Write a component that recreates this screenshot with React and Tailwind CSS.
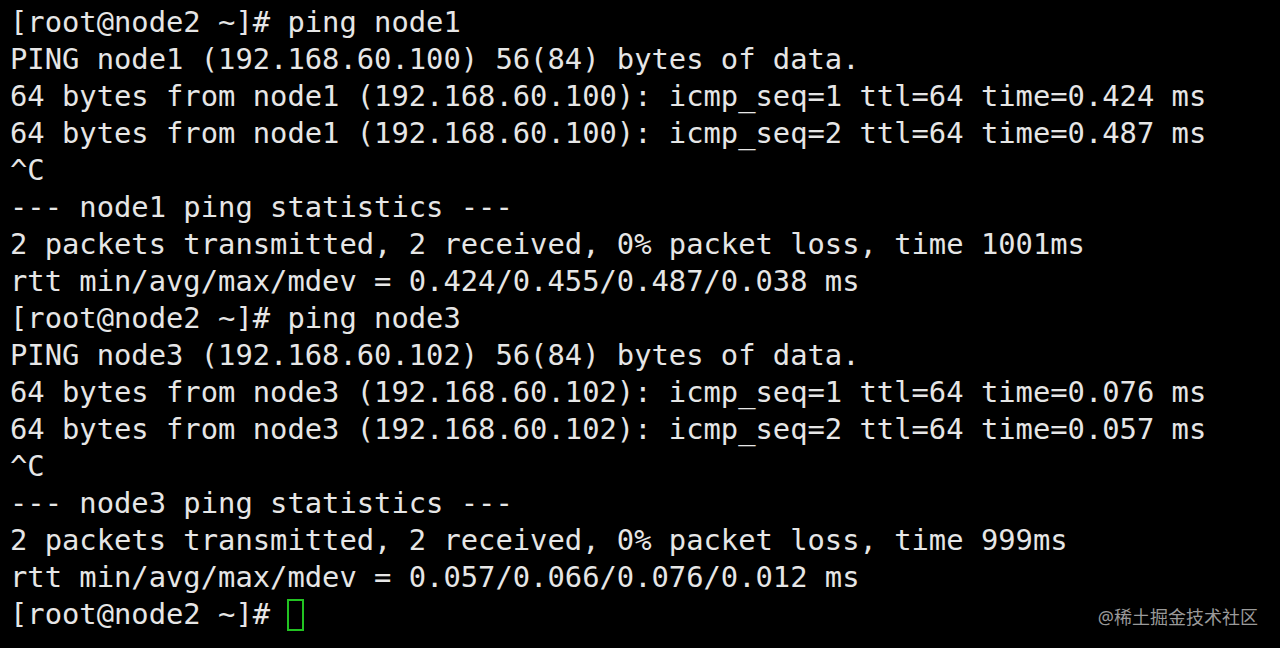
import React from "react";

const lines = [
  "[root@node2 ~]# ping node1",
  "PING node1 (192.168.60.100) 56(84) bytes of data.",
  "64 bytes from node1 (192.168.60.100): icmp_seq=1 ttl=64 time=0.424 ms",
  "64 bytes from node1 (192.168.60.100): icmp_seq=2 ttl=64 time=0.487 ms",
  "^C",
  "--- node1 ping statistics ---",
  "2 packets transmitted, 2 received, 0% packet loss, time 1001ms",
  "rtt min/avg/max/mdev = 0.424/0.455/0.487/0.038 ms",
  "[root@node2 ~]# ping node3",
  "PING node3 (192.168.60.102) 56(84) bytes of data.",
  "64 bytes from node3 (192.168.60.102): icmp_seq=1 ttl=64 time=0.076 ms",
  "64 bytes from node3 (192.168.60.102): icmp_seq=2 ttl=64 time=0.057 ms",
  "^C",
  "--- node3 ping statistics ---",
  "2 packets transmitted, 2 received, 0% packet loss, time 999ms",
  "rtt min/avg/max/mdev = 0.057/0.066/0.076/0.012 ms",
];

export default function App() {
  return (
    <div className="relative w-[1280px] h-[648px] bg-black overflow-hidden">
      <div className="pl-[10px] pt-[4px] text-[#e6e6e6] text-[28.8px] leading-[37px] font-['DejaVu_Sans_Mono',monospace] whitespace-pre">
        {lines.map((l, i) => (
          <div key={i}>{l}</div>
        ))}
        <div className="flex items-center">
          <span>[root@node2 ~]# </span>
          <span className="inline-block w-[17px] h-[32px] border-2 border-[#22c322]" />
        </div>
      </div>
      <div className="absolute right-[22px] bottom-[20px] text-[18px] leading-[22px] text-[#9a9a9a] font-['Noto_Sans','Noto_Sans_CJK_SC',sans-serif]">
        @稀土掘金技术社区
      </div>
    </div>
  );
}
